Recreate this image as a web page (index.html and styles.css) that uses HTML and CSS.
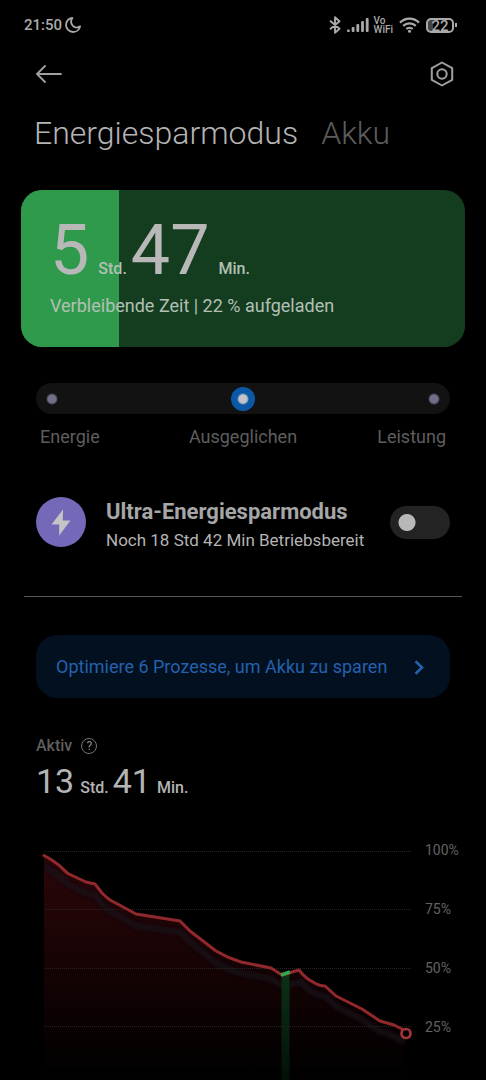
FILE: index.html
```html
<!DOCTYPE html>
<html lang="de">
<head>
<meta charset="utf-8">
<meta name="viewport" content="width=device-width, initial-scale=1">
<title>Energiesparmodus</title>
<link rel="stylesheet" href="styles.css">
</head>
<body>
<div class="screen">
  <div class="status">
    <span class="clock">21:50</span>
    <svg class="moon" width="16" height="16" viewBox="0 0 16 16" fill="none" stroke="currentColor" stroke-width="1.8" stroke-linejoin="round"><path d="M7.300 1C3.700 1.300 1 4.300 1 7.900 1 11.800 4.200 15 8.100 15c3.500 0 6.400-2.400 7-5.700-2.400 1.600-5.300 1.500-7.200-.4-2-2-2.300-5-.6-7.900z"/></svg>
    <div class="status-icons">
      <svg width="12" height="18" viewBox="0 0 12 18" fill="none" stroke="currentColor" stroke-width="1.900" stroke-linejoin="round"><path d="M1 4.800l9.500 8L6 16.700V1.300l4.500 3.900-9.500 8"/></svg>
      <svg width="22" height="14" viewBox="0 0 22 14" fill="currentColor"><rect x="0" y="11.500" width="2.800" height="2.500" rx="1"/><rect x="4.700" y="9" width="2.800" height="5" rx="1"/><rect x="9.400" y="6" width="2.800" height="8" rx="1"/><rect x="14.100" y="3" width="2.800" height="11" rx="1"/><rect x="18.800" y="0" width="2.800" height="14" rx="1"/></svg>
      <span class="vowifi"><span>Vo</span><span>WiFi</span></span>
      <svg class="wifi" width="21" height="16" viewBox="0 0 21 16" fill="none" stroke="currentColor" stroke-width="2.200"><path d="M1 5.600c5.300-5.300 13.700-5.300 19 0M4.200 8.900c3.500-3.500 9.100-3.500 12.600 0M7.300 12c1.800-1.700 4.600-1.700 6.400 0"/><circle cx="10.500" cy="14.200" r="1.500" fill="currentColor" stroke="none"/></svg>
      <span class="battery"><span class="battery-body">22</span><span class="battery-tip"></span></span>
    </div>
  </div>

  <header class="topbar">
    <button class="icon-button" aria-label="Zurück">
      <svg width="26" height="18" viewBox="0 0 26 18" fill="none" stroke="currentColor" stroke-width="1.800" stroke-linecap="round" stroke-linejoin="round"><path d="M9 1L1 9l8 8M1 9h24"/></svg>
    </button>
    <button class="icon-button" aria-label="Einstellungen">
      <svg width="24" height="26" viewBox="0 0 24 26" fill="none" stroke="currentColor" stroke-width="2" stroke-linejoin="round"><path d="M12 1.500l10.200 5.700v11.600L12 24.500 1.800 18.800V7.200z"/><circle cx="12" cy="13" r="4.700"/></svg>
    </button>
  </header>

  <nav class="tabs">
    <button class="tab tab-active">Energiesparmodus</button>
    <button class="tab">Akku</button>
  </nav>

  <section class="card">
    <div class="card-level" style="width:22%"></div>
    <div class="card-content">
      <p class="time time-large"><b>5</b><span>Std.</span><b>47</b><span>Min.</span></p>
      <p class="card-note">Verbleibende Zeit | 22 % aufgeladen</p>
    </div>
  </section>

  <main class="content">
    <div class="modes" role="radiogroup" aria-label="Modus">
      <div class="track">
        <input type="radio" name="mode" id="mode-save">
        <input type="radio" name="mode" id="mode-balanced" checked>
        <input type="radio" name="mode" id="mode-power">
      </div>
      <div class="mode-labels">
        <label for="mode-save">Energie</label>
        <label for="mode-balanced">Ausgeglichen</label>
        <label for="mode-power">Leistung</label>
      </div>
    </div>

    <div class="ultra">
      <span class="bolt">
        <svg width="20" height="27" viewBox="0 0 20 27" fill="currentColor"><path d="M12 .5L.5 15.500h7.700V26.500L19.500 11.500h-7.700z"/></svg>
      </span>
      <label class="ultra-text" for="ultra">
        <strong>Ultra-Energiesparmodus</strong>
        <span>Noch 18 Std 42 Min Betriebsbereit</span>
      </label>
      <input class="switch" type="checkbox" role="switch" id="ultra">
    </div>
  </main>

  <hr class="divider">

  <section class="content">
    <button class="optimise">
      <span>Optimiere 6 Prozesse, um Akku zu sparen</span>
      <svg width="10" height="15" viewBox="0 0 10 15" fill="none" stroke="currentColor" stroke-width="2.600"><path d="M1.500 1.300l6.500 6.200-6.500 6.200"/></svg>
    </button>

    <div class="active-head">
      <h2>Aktiv</h2>
      <button class="help" aria-label="Hilfe">?</button>
    </div>
    <p class="time time-small"><b>13</b><span>Std.</span><b>41</b><span>Min.</span></p>
  </section>

  <section class="chart">
    <svg class="plot" viewBox="0 0 376 252" fill="none">
      <defs>
        <linearGradient id="area" x1="0" y1="14" x2="0" y2="234" gradientUnits="userSpaceOnUse"><stop offset="0" stop-color="#2c0709"/><stop offset=".5" stop-color="#160304"/><stop offset="1" stop-color="#000"/></linearGradient>
        <linearGradient id="charge" x1="0" y1="132" x2="0" y2="238" gradientUnits="userSpaceOnUse"><stop offset="0" stop-color="#0b3117"/><stop offset="1" stop-color="#031008"/></linearGradient>
        <filter id="soft" x="-10%" y="-10%" width="120%" height="120%"><feGaussianBlur stdDeviation="2.500"/></filter>
        <clipPath id="under"><path d="M8 13.500L20 21l13 11 17 8 9 2 7 9 8 7 15 8 11 7 44 6 10 10 26 21 12 6 13 4 30 6 12 7 18-4 8 8 9 5 8 2 11 10 24 12 18 12 12 4 14 7V252H8z"/></clipPath>
      </defs>
      <path fill="url(#area)" d="M8 13.500L20 21l13 11 17 8 9 2 7 9 8 7 15 8 11 7 44 6 10 10 26 21 12 6 13 4 30 6 12 7 18-4 8 8 9 5 8 2 11 10 24 12 18 12 12 4 14 7V252H8z"/>
      <g clip-path="url(#under)"><path transform="translate(0 11)" stroke="#151015" stroke-width="6" filter="url(#soft)" d="M8 13.500l12 7.500 13 11 17 8 9 2 7 9 8 7 15 8 11 7 44 6 10 10 26 21 12 6 13 4 30 6 12 7 9-2 9-2 8 8 9 5 8 2 11 10 24 12 18 12 12 4 14 7"/></g>
      <path fill="url(#charge)" d="M245.500 132l8-2v122h-8z"/>
      <path stroke="#252525" stroke-dasharray="1 1" d="M8 9.500h368M8 67.500h368M8 126.500h368M8 184.500h368M8 243.500h368"/>
      <path stroke="#90282c" stroke-width="3" stroke-linecap="round" stroke-linejoin="round" d="M8 13.500C13 16 16 18 20 21C25 24 29 30 33 32L50 40l9 2 7 9q4 4 8 7l15 8 11 6 44 7 10 10 26 20q12 7 25 11l30 6 11 7 17-5q7 9 14 12 6 4 12 4l11 10 26 13 18 12 14 4 12 6"/>
      <path stroke="#33a64c" stroke-width="3.500" d="M245 133l9-3"/>
      <circle cx="370" cy="191.500" r="4.500" fill="#000" stroke="#a33338" stroke-width="2.700"/>
    </svg>
    <div class="scale"><span>100%</span><span>75%</span><span>50%</span><span>25%</span><span>0%</span></div>
  </section>
</div>
</body>
</html>
```
FILE: styles.css
```css
* { box-sizing: border-box; }
html, body { margin: 0; background: #000; }
body { font-family: Roboto, "Noto Sans", sans-serif; color: #b4b4b4; }
p, h2 { margin: 0; }
svg { display: block; flex: none; }
button { margin: 0; padding: 0; border: 0; background: none; color: inherit; font: inherit; text-align: left; }
input { appearance: none; margin: 0; flex: none; }

.screen { height: 100vh; overflow: hidden; }

.status { display: flex; align-items: center; height: 50px; padding: 0 29px 0 24px; color: #aaa; }
.clock { font-size: 15px; font-weight: 500; line-height: 20px; }
.moon { margin-left: 3px; }
.status-icons { display: flex; align-items: center; gap: 6px; margin-left: auto; }
.vowifi { display: flex; flex-direction: column; font-size: 10px; font-weight: 500; line-height: 9px; margin-left: -1px; }
.battery { display: flex; align-items: center; gap: 1px; }
.battery-body { width: 28px; height: 15px; border: 2px solid #aaa; border-radius: 5px; background: linear-gradient(90deg, #444 22%, #000 22%); font-size: 15px; font-weight: 500; line-height: 12px; text-align: center; }
.battery-tip { width: 2px; height: 4px; background: #aaa; }

.topbar { display: flex; justify-content: space-between; align-items: center; height: 48px; padding: 0 32px 0 36px; color: #a0a0a0; }

.tabs { display: flex; gap: 23px; padding: 13px 34px 0; }
.tab { font-size: 32px; font-weight: 300; line-height: 44px; color: #5c5c5c; }
.tab-active { color: #b4b4b4; }

.card { position: relative; margin: 35px 21px 0; border-radius: 21px; background: #143d20; overflow: hidden; }
.card-level { position: absolute; inset: 0 auto 0 0; background: #2f9a4c; }
.card-content { position: relative; padding: 24px 29px 29px; }
.card-note { margin-top: 8px; font-size: 18px; line-height: 24px; color: #b3c0b5; }

.time { display: flex; align-items: baseline; }
.time b { font-weight: 400; }
.time span { font-size: 16px; font-weight: 500; line-height: 16px; }
.time-large { line-height: 72px; font-size: 70px; color: #b8b8b8; }
.time-large span { color: #b3c0b5; margin: 0 4px 0 9px; }
.time-small { margin-top: 4px; font-size: 34px; line-height: 42px; }
.time-small span { margin: 0 4px 0 6px; }

.content { padding: 0 36px; }
.modes { padding-top: 36px; }
.track { display: flex; justify-content: space-between; align-items: center; height: 31px; padding: 0 4px; border-radius: 16px; background: #121212; }
.track input { width: 24px; height: 24px; border-radius: 50%; background: radial-gradient(circle, #6f6f88 4px, transparent 6px); }
.track input:checked { background: radial-gradient(circle, #c4c4c8 4px, #0b59a6 6px); }
.mode-labels { display: grid; grid-template-columns: 1fr auto 1fr; padding: 11px 4px 0; font-size: 18px; line-height: 24px; color: #5e5e5e; }
.mode-labels label:last-child { text-align: right; }

.ultra { display: flex; align-items: center; margin-top: 43px; }
.bolt { display: grid; place-items: center; flex: none; width: 50px; height: 50px; border-radius: 50%; background: #7469b8; color: #c4c4c4; }
.ultra-text { display: flex; flex-direction: column; gap: 2px; flex: 1; margin-left: 20px; padding-top: 6px; }
.ultra-text strong { font-size: 22px; font-weight: 700; line-height: 28px; color: #a6a6a6; }
.ultra-text span { font-size: 17px; line-height: 24px; }
.switch { width: 60px; height: 33px; border-radius: 17px; background: radial-gradient(circle at 17px 50%, #b8b8b8 8px, #232323 9px); }

.divider { margin: 44px 24px 38px; border: 0; border-top: 1px solid #555; }

.optimise { display: flex; justify-content: space-between; align-items: center; width: 100%; padding: 20px 26px 19px 20px; border-radius: 21px; background: #02101f; color: #2560ad; font-size: 18px; line-height: 24px; }

.active-head { display: flex; align-items: center; gap: 9px; margin-top: 38px; color: #5e5e5e; }
.active-head h2 { font-size: 16px; font-weight: 500; line-height: 20px; }
.help { width: 16px; height: 16px; border: 1px solid #777; border-radius: 50%; color: #888; font-size: 12px; line-height: 14px; text-align: center; }

.chart { display: flex; gap: 13px; margin-top: 40px; padding: 0 28px 0 36px; }
.plot { flex: 1; min-width: 0; }
.scale { display: flex; flex-direction: column; justify-content: space-between; width: 33px; font-size: 14px; line-height: 16px; color: #626262; }
```
